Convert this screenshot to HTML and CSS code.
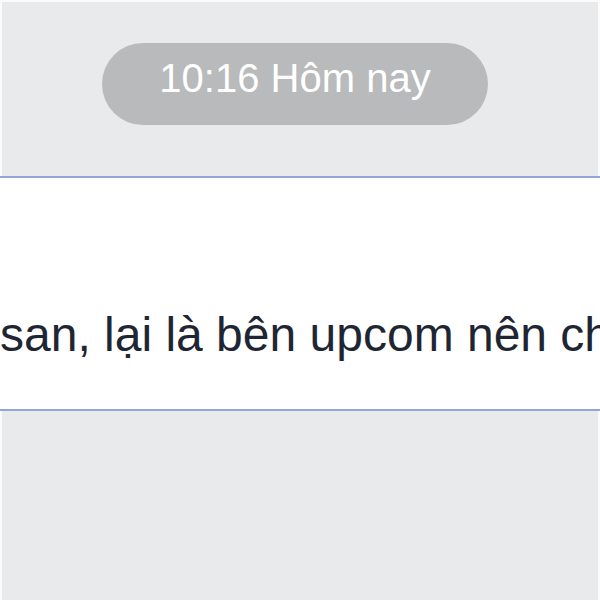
FILE: index.html
```html
<!DOCTYPE html>
<html lang="vi">
<head>
    <meta charset="UTF-8">
    <meta name="viewport" content="width=device-width, initial-scale=1.0">
    <title>Tin nhắn</title>
    <link rel="stylesheet" href="styles.css">
</head>
<body>
    <div class="chat">
        <div class="time-row">
            <span class="time-pill">10:16 Hôm nay</span>
        </div>

        <div class="message">
            <p class="message-text">san, lại là bên upcom nên chưa có nhiều thanh khoản</p>
        </div>
    </div>
</body>
</html>
```

FILE: styles.css
```css
html, body {
    margin: 0;
    padding: 0;
}
body {
    font-family: "Liberation Sans", Arial, sans-serif;
    background-color: #e9eaec;
    width: 600px;
    height: 600px;
    overflow: hidden;
}
.chat {
    height: 600px;
    box-sizing: border-box;
    border-top: 2px solid #fbfbfc;
    border-left: 2px solid #fbfbfc;
    border-right: 2px solid #fbfbfc;
}
.time-row {
    display: flex;
    justify-content: center;
    align-items: flex-start;
    padding: 41px 10px 0 0;
    height: 133px;
}
.time-pill {
    display: inline-block;
    box-sizing: border-box;
    height: 82px;
    line-height: 70px;
    padding: 0 57px 12px;
    border-radius: 41px;
    background: #b9babc;
    color: #ffffff;
    font-size: 40px;
}
.message {
    background: #ffffff;
    border-top: 2px solid #93a6d6;
    border-bottom: 2px solid #93a6d6;
    height: 231px;
    margin: 0 -2px;
    overflow: hidden;
}
.message-text {
    margin: 0;
    padding-top: 127px;
    font-size: 48px;
    line-height: 60px;
    color: #1f2633;
    white-space: nowrap;
    overflow: hidden;
}
```
